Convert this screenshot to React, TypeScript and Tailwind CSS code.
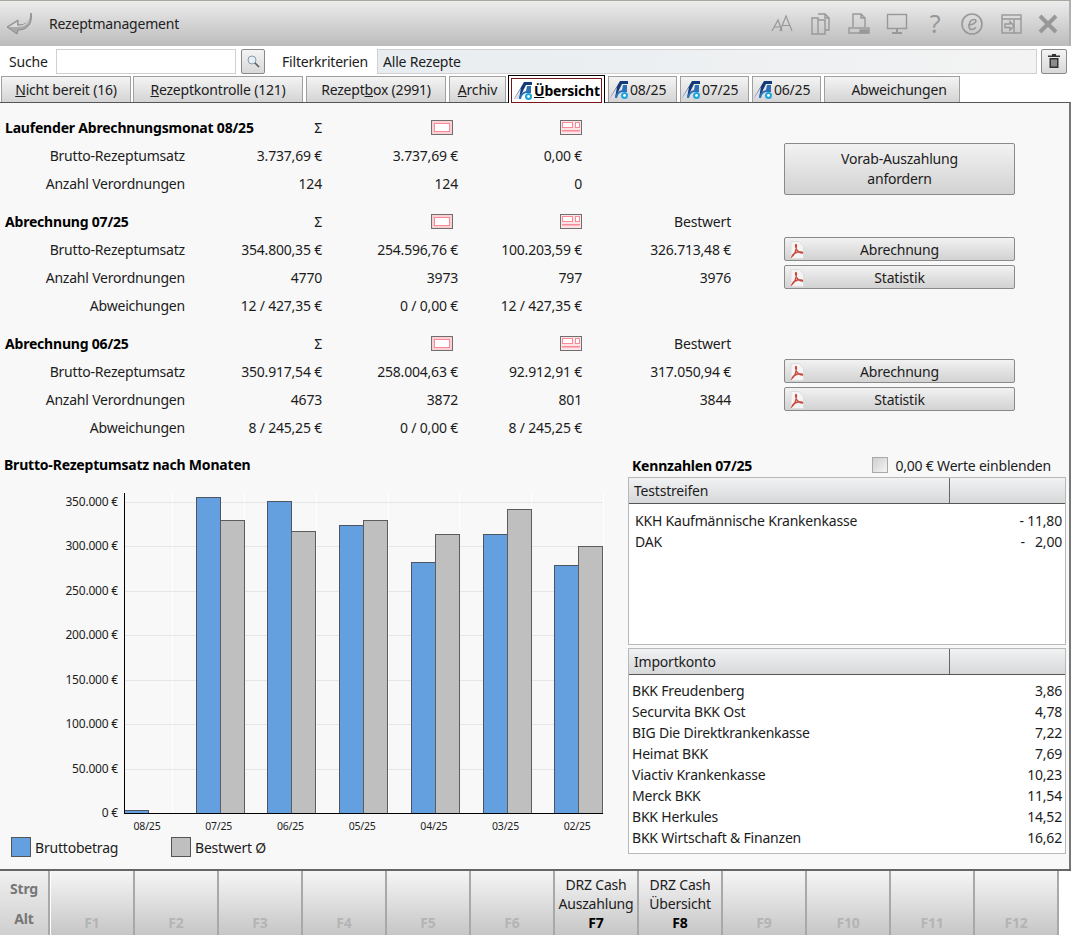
import React from "react";

const months = [
  { m: "08/25", a: 3.7, b: 0 },
  { m: "07/25", a: 354.8, b: 329 },
  { m: "06/25", a: 350.9, b: 317 },
  { m: "05/25", a: 324, b: 329 },
  { m: "04/25", a: 282, b: 314 },
  { m: "03/25", a: 314, b: 342 },
  { m: "02/25", a: 279, b: 300 },
];

const Logo = () => (
  <svg width="21" height="21" viewBox="0 0 21 21" className="shrink-0">
    <path d="M1 19 L11 2 L19 2 L19 5 L13 5 L6 19 Z" fill="#123a78" />
    <path d="M1 19 L8 8 L6 19 Z" fill="#d8dde6" />
    <path d="M14 6 L18 6 L18 13 L13 13 Q9 14 8 19 L6 19 Q7 12 13 11 Z" fill="#2c6fb5" />
    <circle cx="15.5" cy="16.5" r="3.5" fill="#19a6e0" />
    <circle cx="15.5" cy="16.5" r="1.4" fill="#ffffff" />
  </svg>
);

const Pdf = () => (
  <svg width="14" height="18" viewBox="0 0 14 18" className="absolute left-[5px] top-[3px]">
    <path d="M1 0.5 H9 L13.5 5 V17.5 H1 Z" fill="#f4f4f4" stroke="#dcdcdc" />
    <path d="M2 15.5 C4 14 6 10 6.5 5 C6.5 3 5.5 3 5.5 5 C6 9 9 12 12.5 12 C13 11 10 10.5 7.5 11 C5.5 11.5 3 13 2 15.5 Z" fill="none" stroke="#c9473a" strokeWidth="1.3" />
  </svg>
);

const CardA = () => (
  <svg width="22" height="15" viewBox="0 0 22 15" className="ml-auto mr-[5px]">
    <rect x="0.5" y="0.5" width="21" height="14" fill="#fbd0d4" stroke="#6f6f6f" />
    <rect x="3.5" y="3.5" width="15" height="8" fill="#fff" stroke="#fb8a98" />
  </svg>
);

const CardB = () => (
  <svg width="22" height="15" viewBox="0 0 22 15" className="ml-auto">
    <rect x="0.5" y="0.5" width="21" height="14" fill="#fde4e6" stroke="#6f6f6f" />
    <rect x="2.5" y="2.5" width="10" height="5" fill="#fff" stroke="#fb8a98" />
    <rect x="15.5" y="2.5" width="4" height="5" fill="#fff" stroke="#fb8a98" />
    <rect x="2" y="10" width="18" height="1.5" fill="#fb8a98" />
  </svg>
);

const Tab = ({ w, children, logo, center = true }: { w: string; children: React.ReactNode; logo?: boolean; center?: boolean }) => (
  <div
    className={`${w} h-[26px] flex items-center ${center ? "justify-center" : ""} border border-b-0 border-[#a0a0a0] bg-gradient-to-b from-[#f4f4f4] to-[#d4d4d4] whitespace-nowrap text-[#1c1c1c]`}
  >
    {logo && <Logo />}
    {children}
  </div>
);

const Btn = ({ children, pdf, extra = "h-[24px]" }: { children: React.ReactNode; pdf?: boolean; extra?: string }) => (
  <div className={`relative ${extra} flex items-center justify-center text-center rounded-[2px] border border-[#8a8a8a] bg-gradient-to-b from-[#f2f2f2] to-[#d2d2d2] text-[#1c1c1c]`}>
    {pdf && <Pdf />}
    {children}
  </div>
);

const Num = ({ children }: { children?: React.ReactNode }) => <div className="text-right whitespace-nowrap">{children}</div>;

const Section = ({
  title,
  rows,
  best,
  buttons,
}: {
  title: string;
  rows: { label: string; v: (string | undefined)[] }[];
  best?: boolean;
  buttons?: boolean;
}) => (
  <div className="grid grid-cols-[185px_137px_136px_124px_149px_53px_231px] auto-rows-[28px] items-center mb-[10px] text-[#1c1c1c]">
    <div className="font-bold pl-[5px] whitespace-nowrap text-black">{title}</div>
    <Num>Σ</Num>
    <CardA />
    <CardB />
    <Num>{best ? "Bestwert" : ""}</Num>
    <div />
    <div />
    {rows.map((r, i) => (
      <React.Fragment key={r.label}>
        <div className="text-right">{r.label}</div>
        <Num>{r.v[0]}</Num>
        <Num>{r.v[1]}</Num>
        <Num>{r.v[2]}</Num>
        <Num>{r.v[3]}</Num>
        <div />
        <div>
          {buttons && i === 0 && <Btn pdf>Abrechnung</Btn>}
          {buttons && i === 1 && <Btn pdf>Statistik</Btn>}
        </div>
      </React.Fragment>
    ))}
  </div>
);

const Chart = () => {
  const y = (v: number) => 338 - v * 0.89;
  const ticks = [0, 50, 100, 150, 200, 250, 300, 350];
  return (
    <svg width="620" height="358" viewBox="0 0 620 358" className="block">
      {[172, 244, 316, 388, 459, 531, 603].map((x) => (
        <line key={x} x1={x + 0.5} x2={x + 0.5} y1="18" y2="338" stroke="#ffffff" />
      ))}
      {ticks.slice(1).map((t) => (
        <line key={t} x1="124" x2="603" y1={Math.round(y(t)) + 0.5} y2={Math.round(y(t)) + 0.5} stroke="#e6e6e6" />
      ))}
      {ticks.map((t) => (
        <text key={t} x="118" y={y(t) + 4} textAnchor="end" fontSize="12" fill="#1c1c1c">
          {t === 0 ? "0 €" : `${t}.000 €`}
        </text>
      ))}
      {months.map((d, i) => {
        const x = 124 + i * 71.7;
        return (
          <g key={d.m}>
            <rect x={Math.round(x) + 0.5} y={Math.round(y(d.a)) + 0.5} width="24" height={338 - Math.round(y(d.a))} fill="#64a0e0" stroke="#4d5560" />
            {d.b > 0 && (
              <rect x={Math.round(x) + 24.5} y={Math.round(y(d.b)) + 0.5} width="24" height={338 - Math.round(y(d.b))} fill="#bfbfbf" stroke="#5c5c5c" />
            )}
            <text x={x + 23} y="355" textAnchor="middle" fontSize="10.5" fill="#1c1c1c">
              {d.m}
            </text>
          </g>
        );
      })}
      <line x1="124.5" x2="124.5" y1="18" y2="339" stroke="#000" />
      <line x1="124" x2="603" y1="338.5" y2="338.5" stroke="#000" />
    </svg>
  );
};

const Table = ({
  title,
  rows,
  h,
  bodyClass,
}: {
  title: string;
  rows: [string, string][];
  h: string;
  bodyClass: string;
}) => (
  <div className={`${h} border border-[#b8b8b8] bg-white flex flex-col`}>
    <div className="h-[26px] shrink-0 flex border-b border-[#555] bg-gradient-to-b from-[#f0f2f4] to-[#d6d8da]">
      <div className="w-[321px] border-r border-[#666] pl-[5px] flex items-center">{title}</div>
      <div className="flex-1" />
    </div>
    <div className={bodyClass}>
      {rows.map(([a, b]) => (
        <div key={a} className="h-[21px] flex items-center justify-between">
          <span>{a}</span>
          <span className="whitespace-pre">{b}</span>
        </div>
      ))}
    </div>
  </div>
);

const Fkey = ({ k, lines }: { k: string; lines?: string[] }) => (
  <div className="w-[84px] shrink-0 border-r-[2px] border-[#a8a8a8] bg-gradient-to-b from-[#f6f6f6] to-[#c6c6c6] flex flex-col items-center justify-end pb-[3px] text-center leading-[19px]">
    {lines?.map((l) => (
      <div key={l} className="text-[#1c1c1c]">{l}</div>
    ))}
    <div className={lines ? "font-bold text-black" : "font-bold text-[#b4b4b4]"}>{k}</div>
  </div>
);

export default function App() {
  return (
    <div className="w-[1071px] h-[936px] bg-white font-['Noto_Sans',sans-serif] text-[14px] tracking-[-0.2px] overflow-hidden flex flex-col">
      <div className="h-[46px] shrink-0 border-t border-[#a8a8a0] border-r-2 border-r-[#b0b0b0] bg-gradient-to-b from-[#ececec] to-[#bcbcbc] flex items-center pl-[6px] pr-[11px]">
        <svg width="27" height="24" viewBox="0 0 27 24">
          <path d="M25 1 C25 9 21 13 12 13 L12 8 L1 15 L11 22 L12 18 C20 18 27 13 25 1 Z" fill="#a9a9a9" stroke="#8a8a8a" />
          <path d="M3 15 L11 10 L11 14 C17 14 22 11 24 6 C23 12 18 15 11 15 Z" fill="#dcdcdc" />
        </svg>
        <div className="ml-[16px] text-[#222]">Rezeptmanagement</div>
        <div className="ml-auto flex items-center text-[#989898]">
          <svg width="26" height="22" viewBox="0 0 26 22" fill="none" stroke="#989898" strokeWidth="1.2">
            <path d="M2 18 L8 7 L12 18 M4 14 H10" />
            <path d="M10 18 L16 3 L22 18 M12.5 12.5 H19.5" />
          </svg>
          <svg width="24" height="24" viewBox="0 0 24 24" fill="none" stroke="#989898" strokeWidth="1.4" className="ml-[13px]">
            <path d="M3 6 H9 V22 H3 Z M9 8 H16 V22 H9" />
            <path d="M9 2 H16 L20 6 V18 H16 M16 2 V6 H20" />
          </svg>
          <svg width="24" height="24" viewBox="0 0 24 24" fill="none" stroke="#989898" strokeWidth="1.4" className="ml-[14px]">
            <path d="M6 15 V2 H14 L18 6 V15 M14 2 V6 H18" />
            <rect x="2" y="16" width="20" height="5" />
            <rect x="13" y="18" width="8" height="3" fill="#989898" />
          </svg>
          <svg width="24" height="24" viewBox="0 0 24 24" fill="none" stroke="#989898" strokeWidth="1.4" className="ml-[14px]">
            <rect x="2.5" y="2.5" width="19" height="14" />
            <path d="M12 17 V20 M7 21 H17" strokeWidth="2" />
          </svg>
          <div className="w-[24px] ml-[14px] text-center text-[25px] leading-none">?</div>
          <svg width="24" height="24" viewBox="0 0 24 24" fill="none" stroke="#989898" strokeWidth="1.6" className="ml-[13px]">
            <circle cx="12" cy="12" r="10" />
            <path d="M8 13 C12 13 16 11 16 9 C16 7 12 6.500 10 10 C8 14 9 17.500 12 17.500 C14 17.500 15 16.500 16 15.500" />
          </svg>
          <svg width="24" height="24" viewBox="0 0 24 24" fill="none" stroke="#989898" strokeWidth="1.4" className="ml-[15px]">
            <rect x="3" y="3" width="19" height="18" />
            <path d="M3 7 H22 M15 7 V21" />
            <path d="M6 12 H11 V9.500 L15 14 L11 18 V15.500 H6 Z" />
          </svg>
          <svg width="20" height="20" viewBox="0 0 20 20" stroke="#989898" strokeWidth="4" className="ml-[15px]">
            <path d="M2 2 L18 18 M18 2 L2 18" />
          </svg>
        </div>
      </div>

      <div className="h-[28px] shrink-0 flex items-center pl-[9px] pr-[4px] pt-[2px] bg-white text-[#1c1c1c]">
        <span className="w-[47px]">Suche</span>
        <div className="w-[180px] h-[25px] border border-[#d0d0d0] bg-white" />
        <div className="ml-[5px] w-[24px] h-[25px] rounded-[2px] border border-[#8a8a8a] bg-gradient-to-b from-[#f4f4f4] to-[#d8d8d8] flex items-center justify-center">
          <svg width="14" height="14" viewBox="0 0 14 14" fill="none">
            <circle cx="6" cy="6" r="4" fill="#e6eef6" stroke="#8a9aaa" />
            <path d="M9 9 L13 13" stroke="#555" strokeWidth="1.6" />
          </svg>
        </div>
        <span className="ml-[17px] w-[95px]">Filterkriterien</span>
        <div className="w-[660px] h-[25px] border border-[#d0d0d0] bg-gradient-to-r from-[#e8edf1] to-[#f3f3f3] flex items-center pl-[5px]">Alle Rezepte</div>
        <div className="ml-[4px] w-[26px] h-[25px] rounded-[2px] border border-[#8a8a8a] bg-gradient-to-b from-[#f4f4f4] to-[#d8d8d8] flex items-center justify-center">
          <svg width="14" height="16" viewBox="0 0 14 16" fill="#333">
            <path d="M1 2.500 H13 V4 H1 Z M5 1 H9 V2.500 H5 Z" />
            <path d="M2.500 5 H11.500 V15 H2.500 Z M4.500 6.500 V13.500 H5.500 V6.500 Z M6.500 6.500 V13.500 H7.500 V6.500 Z M8.500 6.500 V13.500 H9.500 V6.500 Z" fillRule="evenodd" />
          </svg>
        </div>
      </div>

      <div className="h-[28px] shrink-0 flex items-end pl-[1px] relative z-10">
        <Tab w="w-[130px] mr-[2px]"><span><u>N</u>icht bereit (16)</span></Tab>
        <Tab w="w-[170px] mr-[3px]"><span><u>R</u>ezeptkontrolle (121)</span></Tab>
        <Tab w="w-[140px] mr-[3px]"><span>Rezept<u>b</u>ox (2991)</span></Tab>
        <Tab w="w-[57px] mr-[2px]"><span><u>A</u>rchiv</span></Tab>
        <div className="w-[97px] h-[28px] mr-[3px] border border-b-0 border-black bg-white p-[2px] pb-0 -mb-px">
          <div className="h-full border border-[#7a1518] flex items-center pl-[1px] font-bold text-black">
            <Logo />
            <span><u>Ü</u>bersicht</span>
          </div>
        </div>
        <Tab w="w-[69px] mr-[3px]" logo center={false}><span>08/25</span></Tab>
        <Tab w="w-[69px] mr-[3px]" logo center={false}><span>07/25</span></Tab>
        <Tab w="w-[69px] mr-[3px]" logo center={false}><span>06/25</span></Tab>
        <Tab w="w-[136px]"><span className="pl-[14px]">Abweichungen</span></Tab>
      </div>

      <div className="h-[767px] shrink-0 bg-[#f8f8f8] border-t border-[#555] border-r-2 border-r-[#777] flex flex-col pt-[10px]">
        <div>
          <Section
            title="Laufender Abrechnungsmonat 08/25"
            rows={[
              { label: "Brutto-Rezeptumsatz", v: ["3.737,69 €", "3.737,69 €", "0,00 €"] },
              { label: "Anzahl Verordnungen", v: ["124", "124", "0"] },
            ]}
          />
          <div className="relative">
            <div className="absolute left-[784px] top-[-64px] w-[231px]">
              <Btn extra="h-[52px]">
                <span className="leading-[20px]">Vorab-Auszahlung<br />anfordern</span>
              </Btn>
            </div>
          </div>
          <Section
            title="Abrechnung 07/25"
            best
            buttons
            rows={[
              { label: "Brutto-Rezeptumsatz", v: ["354.800,35 €", "254.596,76 €", "100.203,59 €", "326.713,48 €"] },
              { label: "Anzahl Verordnungen", v: ["4770", "3973", "797", "3976"] },
              { label: "Abweichungen", v: ["12 / 427,35 €", "0 / 0,00 €", "12 / 427,35 €"] },
            ]}
          />
          <Section
            title="Abrechnung 06/25"
            best
            buttons
            rows={[
              { label: "Brutto-Rezeptumsatz", v: ["350.917,54 €", "258.004,63 €", "92.912,91 €", "317.050,94 €"] },
              { label: "Anzahl Verordnungen", v: ["4673", "3872", "801", "3844"] },
              { label: "Abweichungen", v: ["8 / 245,25 €", "0 / 0,00 €", "8 / 245,25 €"] },
            ]}
          />
        </div>

        <div className="flex mt-[2px]">
          <div className="w-[628px] shrink-0">
            <div className="h-[22px] flex items-center pl-[4px] font-bold text-black">Brutto-Rezeptumsatz nach Monaten</div>
            <Chart />
            <div className="flex items-center h-[24px] pl-[11px] mt-[2px] text-[#1c1c1c]">
              <div className="w-[20px] h-[20px] bg-[#64a0e0] border border-[#555]" />
              <span className="ml-[4px] w-[136px]">Bruttobetrag</span>
              <div className="w-[20px] h-[20px] bg-[#bfbfbf] border border-[#555]" />
              <span className="ml-[4px]">Bestwert Ø</span>
            </div>
          </div>
          <div className="w-[438px] shrink-0 text-[#1c1c1c]">
            <div className="h-[24px] flex items-center pl-[4px]">
              <span className="font-bold text-black">Kennzahlen 07/25</span>
              <div className="ml-auto w-[16px] h-[16px] border border-[#a8a8a8] bg-gradient-to-br from-[#cfcfcf] to-[#f4f4f4]" />
              <span className="ml-[7px] mr-[15px]">0,00 € Werte einblenden</span>
            </div>
            <Table
              title="Teststreifen"
              h="h-[168px]"
              bodyClass="pt-[6px] pl-[6px] pr-[3px]"
              rows={[
                ["KKH Kaufmännische Krankenkasse", "- 11,80"],
                ["DAK", "-   2,00"],
              ]}
            />
            <div className="h-[3px]" />
            <Table
              title="Importkonto"
              h="h-[206px]"
              bodyClass="pt-[5px] pl-[3px] pr-[3px]"
              rows={[
                ["BKK Freudenberg", "3,86"],
                ["Securvita BKK Ost", "4,78"],
                ["BIG Die Direktkrankenkasse", "7,22"],
                ["Heimat BKK", "7,69"],
                ["Viactiv Krankenkasse", "10,23"],
                ["Merck BKK", "11,54"],
                ["BKK Herkules", "14,52"],
                ["BKK Wirtschaft & Finanzen", "16,62"],
              ]}
            />
          </div>
        </div>
      </div>

      <div className="h-[66px] shrink-0 flex border-t-2 border-[#666]">
        <div className="w-[50px] shrink-0 mr-[1px] border-r-[2px] border-[#a8a8a8] bg-gradient-to-b from-[#f0f0f0] to-[#cfcfcf] flex flex-col items-center justify-around font-bold text-[#777] py-[2px]">
          <span>Strg</span>
          <span>Alt</span>
        </div>
        {["F1", "F2", "F3", "F4", "F5", "F6"].map((k) => (
          <Fkey key={k} k={k} />
        ))}
        <Fkey k="F7" lines={["DRZ Cash", "Auszahlung"]} />
        <Fkey k="F8" lines={["DRZ Cash", "Übersicht"]} />
        {["F9", "F10", "F11", "F12"].map((k) => (
          <Fkey key={k} k={k} />
        ))}
      </div>
    </div>
  );
}
